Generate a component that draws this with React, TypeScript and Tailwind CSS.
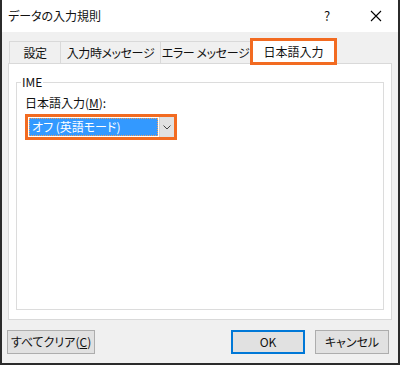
import React from 'react';

const tabs = [
  { label: '設定', width: 'w-[51px]' },
  { label: '入力時メッセージ', width: 'w-[100px]' },
  { label: 'エラー メッセージ', width: 'w-[90px]' },
];

const App: React.FC = () => {
  return (
    <div className="w-[400px] h-[365px] flex flex-col bg-[#f0f0f0] border-l-2 border-r-2 border-b-2 border-[#2b2b2b] text-[12px] text-[#111] overflow-hidden font-['Noto_Sans_CJK_JP','Noto_Sans',sans-serif] [font-feature-settings:'palt']">
      {/* title bar */}
      <div className="h-[32px] shrink-0 bg-white flex items-center">
        <span className="pl-[6px] flex-1">データの入力規則</span>
        <span className="w-[14px] text-center text-[13px] mr-[36px]">?</span>
        <svg width="12" height="12" viewBox="0 0 12 12" className="mr-[16px]">
          <path d="M1 1 L11 11 M11 1 L1 11" stroke="#000" strokeWidth="1.1" />
        </svg>
      </div>

      {/* tab strip */}
      <div className="flex items-end pl-[7px] mt-[6px] h-[27px] relative z-10 tracking-[-0.4px]">
        {tabs.map((t) => (
          <div
            key={t.label}
            className={`${t.width} shrink-0 h-[22px] mb-[2px] flex items-center justify-center border-t border-l border-[#d9d9d9] bg-[#f0f0f0] whitespace-nowrap`}
          >
            {t.label}
          </div>
        ))}
        <div className="w-[87px] shrink-0 h-[27px] border-[3px] border-[#f26b21] bg-white flex items-center justify-center whitespace-nowrap tracking-normal">
          日本語入力
        </div>
      </div>

      {/* panel */}
      <div className="mx-[6px] -mt-[2px] h-[257px] bg-white border border-[#d9d9d9] pt-[18px] px-[7px]">
        <div className="relative h-[228px] border border-[#dcdcdc]">
          <span className="absolute -top-[9px] left-[4px] bg-white px-[1px] leading-[16px]">IME</span>
          <div className="pt-[12px] pl-[8px]">
            <div className="leading-[16px]">
              日本語入力(<span className="underline">M</span>):
            </div>
            <div className="mt-[3px] w-[152px] h-[26px] border-[3px] border-[#f26b21] flex">
              <div className="flex-1 bg-white p-[1px] pr-0">
                <div className="h-full bg-[#3399ff] text-white border border-dotted border-[#f5a05a] flex items-center pl-[2px] leading-none whitespace-nowrap">
                  オフ (英語モード)
                </div>
              </div>
              <div className="w-[15px] ml-[1px] bg-[#e1e1e1] border-l border-[#cfcfcf] flex items-center justify-center">
                <svg width="8" height="5" viewBox="0 0 8 5">
                  <path d="M0.5 0.5 L4 4 L7.5 0.5" stroke="#444" strokeWidth="1" fill="none" />
                </svg>
              </div>
            </div>
          </div>
        </div>
      </div>

      {/* buttons */}
      <div className="flex items-center mt-[10px] px-[5px]">
        <button className="w-[88px] shrink-0 h-[24px] bg-[#e1e1e1] border border-[#adadad] flex items-center justify-center whitespace-nowrap">
          すべてクリア(<span className="underline">C</span>)
        </button>
        <div className="flex-1" />
        <button className="w-[74px] shrink-0 h-[24px] bg-[#e1e1e1] border-2 border-[#0078d7] flex items-center justify-center">
          OK
        </button>
        <button className="w-[74px] shrink-0 h-[24px] ml-[10px] mr-[4px] bg-[#e1e1e1] border border-[#adadad] flex items-center justify-center whitespace-nowrap">
          キャンセル
        </button>
      </div>
    </div>
  );
};

export default App;
